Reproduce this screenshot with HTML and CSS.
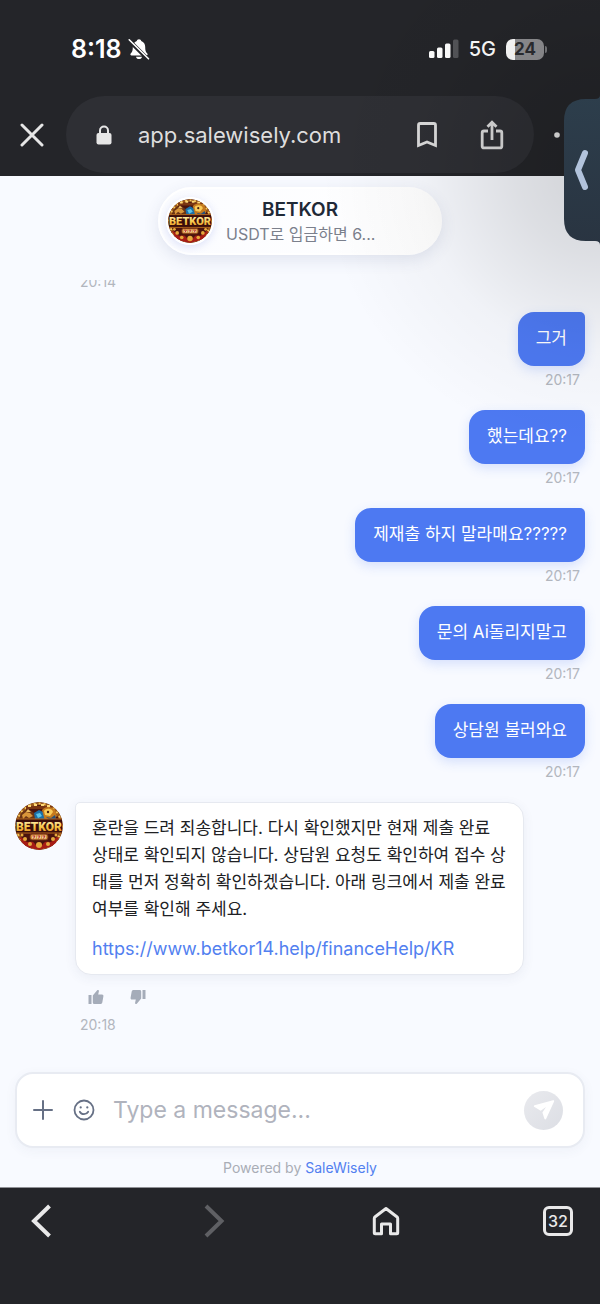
FILE: index.html
```html
<!DOCTYPE html>
<html lang="ko">
<head>
  <meta charset="UTF-8" />
  <meta name="viewport" content="width=device-width, initial-scale=1.0"/>
  <title>BETKOR - SaleWisely</title>
  <link rel="stylesheet" href="styles.css">
</head>
<body>
  <!-- shared logo -->
  <svg class="defs" width="48" height="48" aria-hidden="true">
    <defs>
      <clipPath id="round"><circle cx="24" cy="24" r="24"/></clipPath>
      <linearGradient id="gold" x1="0" y1="0" x2="0" y2="1">
        <stop offset="0" stop-color="#fff6c4"/>
        <stop offset="0.5" stop-color="#f8c94c"/>
        <stop offset="1" stop-color="#e08a1c"/>
      </linearGradient>
    </defs>
    <symbol id="logo" viewBox="0 0 48 48">
      <g clip-path="url(#round)">
        <rect width="48" height="48" fill="#4a130d"/>
        <circle cx="24" cy="24" r="22.5" fill="none" stroke="#9c5a1c" stroke-width="3"/>
        <circle cx="24" cy="24" r="22.5" fill="none" stroke="#f3c45a" stroke-width="2" stroke-dasharray="2 3"/>
        <path d="M11 4h26v3H11z" fill="#7a3512"/>
        <path d="M13 3h3v2h-3zM19 2h3v2h-3zM26 2h3v2h-3zM32 3h3v2h-3z" fill="#ffd978"/>
        <path d="M5 16c0-6 5-9 10-8l4 3 2 5-4 3H6z" fill="#6b3414"/>
        <path d="M7 13l4-3 4 1 3 3-4 2-3-2-3 3z" fill="#d9963a"/>
        <path d="M11 10l2-3 3 3z" fill="#edbc61"/>
        <path d="M19 11l5-3 4 2 3 6-5 3-6-2z" fill="#1b6fa8"/>
        <path d="M21 12l4-1 2 3-4 2z" fill="#5cc4e8"/>
        <path d="M27 8c3-4 10-4 13 0l2 6-4 5h-8z" fill="#c57a1e"/>
        <path d="M29 9c2-3 8-3 9 1l-3 4-5-1z" fill="#f9cb59"/>
        <path d="M31 15l5 1 4-3 1 4-5 2z" fill="#26507c"/>
        <circle cx="33" cy="10" r="1.2" fill="#4a2010"/>
        <rect x="1" y="17" width="46" height="14" fill="#3a0d0b"/>
        <path d="M1 17h46M1 31h46" stroke="#b86b20" stroke-width="1"/>
        <rect x="15" y="32" width="18" height="6" rx="2" fill="#d7953c" stroke="#6c2613"/>
        <path d="M17 33.500h4v3h-4zM22 33.500h4v3h-4zM27 33.500h4v3h-4z" fill="#e8c9a0"/>
        <path d="M17.500 34h2.500l-1.500 2.500M22.500 34h2.500l-1.500 2.500M27.500 34h2.500l-1.500 2.500" fill="none" stroke="#bd2c20" stroke-width="1"/>
        <path d="M4 35c5 0 5 5 9 5s5-1 7 2 6 3 8 0 4-2 7-2 4-5 9-5l-5 9-15 4-14-3z" fill="#a61c16"/>
        <g fill="#e6a93c">
          <circle cx="10" cy="37" r="2"/><circle cx="38" cy="37" r="2"/>
          <circle cx="15" cy="42" r="2"/><circle cx="33" cy="42" r="2"/>
          <circle cx="24" cy="43" r="3"/><circle cx="7" cy="33" r="1.500"/><circle cx="41" cy="33" r="1.500"/>
        </g>
        <text x="24" y="28.500" class="logo-text" fill="url(#gold)">BETKOR</text>
      </g>
    </symbol>
  </svg>

  <div class="phone">
    <header class="top">
      <div class="status-bar">
        <div class="status-left">
          <span class="clock">8:18</span>
          <svg width="22" height="22" viewBox="0 0 22 22" aria-hidden="true">
            <path d="M11 1.200c1.300 0 2 .8 2.200 1.700 2.600.9 4 3.200 4 6 0 4 .8 5.100 2.100 6.600.7.900.3 1.900-.9 1.900H3.600c-1.200 0-1.600-1-.9-1.900C4 14 4.800 12.900 4.800 8.900c0-2.800 1.400-5.100 4-6C9 2 9.700 1.200 11 1.200z" fill="#fff"/>
            <path d="M8 18.800h6c-.3 1.400-1.400 2.300-3 2.300s-2.700-.9-3-2.300z" fill="#fff"/>
            <path d="M1 2.500L20 21.300" stroke="#242529" stroke-width="4"/>
            <path d="M1.200 1.800L20.500 20.800" stroke="#fff" stroke-width="1.600" stroke-linecap="round"/>
          </svg>
        </div>
        <div class="status-right">
          <svg width="30" height="20" viewBox="0 0 30 20" aria-hidden="true">
            <g fill="#fff">
              <rect x="0" y="12" width="5.500" height="7" rx="1.500"/>
              <rect x="8" y="8.500" width="5.500" height="10.500" rx="1.500"/>
              <rect x="16" y="4.500" width="5.500" height="14.500" rx="1.500"/>
            </g>
            <rect x="24" y="0.500" width="5.500" height="18.500" rx="1.500" fill="#535458"/>
          </svg>
          <span class="network">5G</span>
          <span class="battery"><span class="battery-level">24</span></span>
        </div>
      </div>

      <div class="browser-bar">
        <button class="icon-btn" type="button" aria-label="Close">
          <svg width="24" height="24" viewBox="0 0 24 24"><path d="M2 2l20 20M22 2L2 22" stroke="#e6e6e6" stroke-width="3" stroke-linecap="round"/></svg>
        </button>
        <div class="address">
          <svg width="16" height="20" viewBox="0 0 16 20" aria-hidden="true">
            <path d="M4 9V5.500a4 4 0 0 1 8 0V9" fill="none" stroke="#e6e6e6" stroke-width="2"/>
            <rect x="0.500" y="8" width="15" height="11.500" rx="2" fill="#e6e6e6"/>
          </svg>
          <span class="url">app.salewisely.com</span>
          <button class="icon-btn" type="button" aria-label="Bookmark">
            <svg width="20" height="26" viewBox="0 0 20 26"><path d="M1.500 3.200c0-1 .6-1.700 1.700-1.700h13.600c1.100 0 1.700.7 1.700 1.700v20.300L10 20l-8.500 3.500z" fill="none" stroke="#dcdcdc" stroke-width="2.800"/></svg>
          </button>
          <button class="icon-btn" type="button" aria-label="Share">
            <svg width="24" height="30" viewBox="0 0 24 30"><path d="M8 11H4c-1 0-1.800.7-1.800 1.800v13.400c0 1 .7 1.700 1.800 1.700h16c1 0 1.800-.7 1.800-1.700V12.800c0-1-.7-1.800-1.800-1.800h-4M12 20V3M7.500 6.800L12 2.200l4.500 4.600" fill="none" stroke="#dcdcdc" stroke-width="2.800"/></svg>
          </button>
        </div>
        <button class="icon-btn more" type="button" aria-label="More">
          <svg width="26" height="6" viewBox="0 0 26 6" fill="#e6e6e6"><circle cx="3" cy="3" r="2.800"/><circle cx="13" cy="3" r="2.800"/><circle cx="23" cy="3" r="2.800"/></svg>
        </button>
      </div>
    </header>

    <main class="chat">
      <div class="chat-header">
        <div class="chat-title">
          <svg class="avatar avatar-ring" role="img" aria-label="BETKOR"><use href="#logo"/></svg>
          <div class="chat-info">
            <h1>BETKOR</h1>
            <p>USDT로 입금하면 6...</p>
          </div>
        </div>
      </div>

      <div class="messages">
        <div class="reply-time"><time class="time">20:14</time></div>
        <div class="message">
          <p class="bubble">그거</p>
          <time class="time">20:17</time>
        </div>
        <div class="message">
          <p class="bubble">했는데요??</p>
          <time class="time">20:17</time>
        </div>
        <div class="message">
          <p class="bubble">제재출 하지 말라매요?????</p>
          <time class="time">20:17</time>
        </div>
        <div class="message">
          <p class="bubble">문의 Ai돌리지말고</p>
          <time class="time">20:17</time>
        </div>
        <div class="message">
          <p class="bubble">상담원 불러와요</p>
          <time class="time">20:17</time>
        </div>
        <div class="reply">
          <svg class="avatar" role="img" aria-label="BETKOR"><use href="#logo"/></svg>
          <div class="reply-body">
            <div class="reply-bubble">
              <p>혼란을 드려 죄송합니다. 다시 확인했지만 현재 제출 완료 상태로 확인되지 않습니다. 상담원 요청도 확인하여 접수 상태를 먼저 정확히 확인하겠습니다. 아래 링크에서 제출 완료 여부를 확인해 주세요.</p>
              <a href="https://www.betkor14.help/financeHelp/KR">https://www.betkor14.help/financeHelp/KR</a>
            </div>
            <div class="feedback">
              <button class="icon-btn" type="button" aria-label="Good reply">
                <svg width="16" height="16" viewBox="0 0 16 16" fill="#a5acb9"><path d="M.5 6h3v9h-3zM4.800 6.500L9.200 1.200c.8-.7 1.900 0 1.700 1L10.200 5.500h3.800c1 0 1.600.8 1.400 1.800l-1.100 6.200c-.2.900-.9 1.500-1.800 1.500H6.300c-.9 0-1.500-.6-1.500-1.500z"/></svg>
              </button>
              <button class="icon-btn" type="button" aria-label="Bad reply">
                <svg width="16" height="16" viewBox="0 0 16 16" fill="#a5acb9"><path d="M12.500 1h3v9h-3zM11.200 9.500l-4.400 5.300c-.8.700-1.900 0-1.700-1l.7-3.300H2c-1 0-1.600-.8-1.400-1.800l1.100-6.200C1.900 1.600 2.600 1 3.500 1h6.200c.9 0 1.500.6 1.500 1.500z"/></svg>
              </button>
            </div>
            <div class="reply-time"><time class="time">20:18</time></div>
          </div>
        </div>
      </div>

      <form class="composer">
        <button class="icon-btn" type="button" aria-label="Attach">
          <svg width="20" height="20" viewBox="0 0 20 20"><path d="M10 1v18M1 10h18" stroke="#667085" stroke-width="2" stroke-linecap="round"/></svg>
        </button>
        <button class="icon-btn" type="button" aria-label="Emoji">
          <svg width="22" height="22" viewBox="0 0 22 22" fill="none" stroke="#667085" stroke-width="1.800" stroke-linecap="round"><circle cx="11" cy="11" r="9.500"/><path d="M6.800 12.700c1.800 3.200 6.600 3.200 8.400 0"/><path d="M7.700 8.300v.2M14.300 8.300v.2" stroke-width="2.200"/></svg>
        </button>
        <input class="composer-input" type="text" placeholder="Type a message..." aria-label="Type a message">
        <button class="send" type="submit" aria-label="Send">
          <svg width="24" height="24" viewBox="0 0 24 24"><path d="M2.500 7.200L21 2.200c.8-.2 1.400.4 1.100 1.200L14.200 20.800c-.4.900-1.500.8-1.800-.1l-2-6.300 3.600-5.300-5.300 3.600-6.200-3.600c-.9-.5-.8-1.600 0-1.900z" fill="#fff"/></svg>
        </button>
      </form>
      <p class="powered">Powered by <a href="#">SaleWisely</a></p>
    </main>

    <nav class="bottom-nav">
      <button class="icon-btn" type="button" aria-label="Back">
        <svg width="30" height="34" viewBox="0 0 30 34"><path d="M22.500 2L7 17l15.500 15" fill="none" stroke="#e9e9e9" stroke-width="4"/></svg>
      </button>
      <button class="icon-btn" type="button" aria-label="Forward">
        <svg width="30" height="34" viewBox="0 0 30 34"><path d="M7 2l15.500 15L7 32" fill="none" stroke="#5f6064" stroke-width="4"/></svg>
      </button>
      <button class="icon-btn" type="button" aria-label="Home">
        <svg width="30" height="30" viewBox="0 0 30 30"><path d="M3.300 12.500c0-.8.3-1.300.9-1.800L15 2.500l10.800 8.200c.6.500.9 1 .9 1.800v14.200c0 .6-.4 1-1 1h-6.200V18h-9v9.700H4.300c-.6 0-1-.4-1-1z" fill="none" stroke="#e9e9e9" stroke-width="3" stroke-linejoin="round"/></svg>
      </button>
      <button class="icon-btn tabs" type="button" aria-label="32 tabs">32</button>
    </nav>

    <button class="side-handle" type="button" aria-label="Open side panel">
      <svg width="36" height="150" viewBox="0 0 36 150">
        <defs><linearGradient id="panel" x1="0" y1="0" x2="0" y2="1"><stop offset="0" stop-color="#2d3e4c"/><stop offset="1" stop-color="#293441"/></linearGradient></defs>
        <path d="M36 0q0 4-5 4h-9Q0 4 0 26v98q0 22 22 22h9q5 0 5 4z" fill="url(#panel)"/>
        <path d="M21 58L14 75l7 17" fill="none" stroke="#b2c3dc" stroke-width="6" stroke-linecap="round" stroke-linejoin="round"/>
      </svg>
    </button>
  </div>
</body>
</html>
```
FILE: styles.css
```css
* {
  box-sizing: border-box;
}

body {
  margin: 0;
  font-family: Inter, "Noto Sans CJK KR", sans-serif;
  background-color: #242529;
  color: #202124;
}

h1, p {
  margin: 0;
}

button {
  font-family: inherit;
  cursor: pointer;
}

a {
  color: #5280f0;
  text-decoration: none;
}

.defs {
  position: absolute;
}

.logo-text {
  font-family: Roboto, sans-serif;
  font-size: 12px;
  font-weight: 900;
  text-anchor: middle;
}

.phone {
  position: relative;
  display: flex;
  flex-direction: column;
  height: 100vh;
  overflow: hidden;
}

.icon-btn {
  display: flex;
  align-items: center;
  justify-content: center;
  padding: 0;
  border: none;
  background: none;
}

/* status bar + address bar */
.top {
  background-color: #242529;
  padding-bottom: 3px;
}

.status-bar {
  display: flex;
  justify-content: space-between;
  align-items: center;
  height: 96px;
  padding: 2px 56px 0 71px;
}

.status-left, .status-right {
  display: flex;
  align-items: center;
}

.status-left {
  gap: 6px;
}

.status-right {
  gap: 10px;
}

.clock {
  color: #fff;
  font-size: 25px;
  font-weight: 600;
}

.network {
  color: #fff;
  font-size: 20px;
  font-weight: 500;
}

.battery {
  position: relative;
  display: flex;
  width: 38px;
  height: 21px;
  border-radius: 7px;
  background: linear-gradient(to right, #fff 9px, #8e8e91 9px);
}

.battery::after {
  content: "";
  position: absolute;
  right: -3px;
  top: 7px;
  width: 2px;
  height: 7px;
  border-radius: 0 2px 2px 0;
  background-color: #77787b;
}

.battery-level {
  margin: auto;
  color: #2b2c30;
  font-size: 17px;
  font-weight: 700;
  line-height: 21px;
}

.browser-bar {
  display: flex;
  align-items: center;
  gap: 20px;
  padding-left: 20px;
}

.address {
  flex: 1;
  display: flex;
  align-items: center;
  height: 77px;
  padding: 0 30px;
  border-radius: 39px;
  background-color: #2e2f34;
  margin-left: 2px;
}

.url {
  flex: 1;
  margin-left: 26px;
  color: #dedede;
  font-size: 22px;
}

.address .icon-btn + .icon-btn {
  margin-left: 43px;
}

.more {
  width: 46px;
  justify-content: flex-start;
}

/* chat */
.chat {
  flex: 1;
  min-height: 0;
  display: flex;
  flex-direction: column;
  padding: 0 15px;
  background-color: #f8faff;
  border-bottom: 1px solid #909196;
}

.chat-header {
  display: flex;
  justify-content: center;
  height: 104px;
  padding-top: 11px;
}

.chat-title {
  display: grid;
  grid-template-columns: 50px 148px 50px;
  column-gap: 10px;
  align-items: center;
  height: 68px;
  padding: 0 6px;
  border: 2px solid #fff;
  border-radius: 34px;
  background: linear-gradient(to right, #fbfcff, #fff);
  box-shadow: 0 5px 16px rgba(60, 70, 120, 0.12);
}

.avatar {
  display: block;
  width: 48px;
  height: 48px;
  border-radius: 50%;
}

.avatar-ring {
  border: 2px solid #fff;
  box-shadow: 0 2px 8px rgba(90, 110, 220, 0.2);
}

.chat-info {
  text-align: center;
  white-space: nowrap;
}

.chat-info h1 {
  color: #1f2937;
  font-size: 19px;
  font-weight: 600;
  line-height: 25px;
}

.chat-info p {
  color: #7b808c;
  font-size: 16px;
  line-height: 24px;
}

.messages {
  flex: 1;
  min-height: 0;
  display: flex;
  flex-direction: column;
  justify-content: flex-end;
  gap: 21px;
  margin: 0 -15px;
  padding: 0 15px 38px;
  overflow: hidden;
}

.message {
  display: flex;
  flex-direction: column;
  align-items: flex-end;
  gap: 4px;
}

.bubble {
  padding: 13px 18px 14px;
  border-radius: 16px 5px 16px 16px;
  background-color: #4d79f2;
  color: #fff;
  font-size: 17px;
  line-height: 27px;
  box-shadow: 0 4px 12px rgba(77, 121, 242, 0.2);
}

.time {
  display: block;
  padding: 0 5px;
  color: #b2b6be;
  font-size: 14px;
  line-height: 19px;
}

.messages > .reply-time {
  padding-left: 60px;
}

.reply {
  display: flex;
  align-items: flex-start;
  gap: 12px;
}

.reply-bubble {
  width: 449px;
  max-width: 100%;
  padding: 12px 16px;
  border: 1px solid #e6e9f0;
  border-radius: 5px 16px 16px 16px;
  background-color: #fff;
  font-size: 17px;
  line-height: 27px;
  box-shadow: 0 3px 12px rgba(60, 70, 110, 0.07);
}

.reply-bubble a {
  display: block;
  margin-top: 12px;
  font-size: 18px;
}

.feedback {
  display: flex;
  gap: 26px;
  height: 20px;
  margin: 12px 0 8px 13px;
}

.composer {
  display: flex;
  align-items: center;
  height: 76px;
  padding: 0 20px 0 16px;
  border: 2px solid #e8ebf2;
  border-radius: 18px;
  background-color: #fff;
  box-shadow: 0 3px 12px rgba(60, 70, 110, 0.05);
}

.composer .icon-btn + .icon-btn {
  margin-left: 20px;
}

.composer-input {
  flex: 1;
  min-width: 0;
  margin: 0 16px 0 18px;
  padding: 0;
  border: none;
  outline: none;
  background: none;
  font-family: inherit;
  font-size: 23px;
}

.composer-input::placeholder {
  color: #b0b3bd;
}

.send {
  display: flex;
  align-items: center;
  justify-content: center;
  width: 39px;
  height: 39px;
  padding: 0;
  border: none;
  border-radius: 50%;
  background: linear-gradient(135deg, #e9eaee, #dcdee4);
}

.powered {
  padding: 10px 0 9px;
  color: #a9adb6;
  font-size: 14px;
  line-height: 20px;
  text-align: center;
}

.bottom-nav {
  display: flex;
  justify-content: space-between;
  align-items: flex-start;
  height: 116px;
  padding: 16px 27px 0;
  background-color: #242529;
}

.bottom-nav .icon-btn {
  width: 30px;
  height: 34px;
}

.bottom-nav .tabs {
  height: 30px;
  margin-top: 2px;
  border: 3px solid #e9e9e9;
  border-radius: 6px;
  color: #e9e9e9;
  font-size: 16px;
  font-weight: 500;
}

/* panel handle on the right edge, with its soft shadow over the page */
.side-handle {
  position: absolute;
  top: 95px;
  right: 0;
  padding: 0;
  border: none;
  background: none;
}

.side-handle svg {
  position: relative;
  display: block;
}

.side-handle::before {
  content: "";
  position: absolute;
  top: -205px;
  right: 0;
  width: 280px;
  height: 560px;
  background: radial-gradient(ellipse closest-side at 100% 50%, rgba(0, 0, 0, 0.16), rgba(0, 0, 0, 0));
  background: radial-gradient(280px 280px at 100% 50%, rgba(0, 0, 0, 0.16), rgba(0, 0, 0, 0.11) 30%, rgba(0, 0, 0, 0.03) 65%, rgba(0, 0, 0, 0));
  pointer-events: none;
}
```
